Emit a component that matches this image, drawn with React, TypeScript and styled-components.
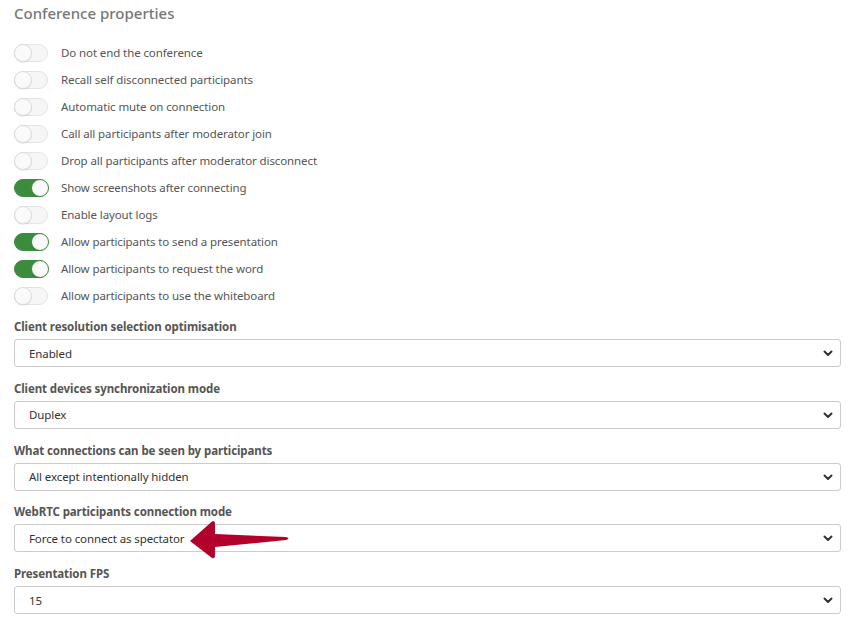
import React from 'react';
import styled, { createGlobalStyle } from 'styled-components';

const GlobalStyle = createGlobalStyle`
  html, body {
    margin: 0;
    padding: 0;
    background: #fff;
  }
  body {
    font-family: "Noto Sans", "Open Sans", Arial, sans-serif;
  }
`;

const Page = styled.div`
  padding: 3px 12px 0 14px;
  width: 827px;
`;

const Title = styled.h2`
  margin: 0 0 20.5px;
  font-size: 15px;
  font-weight: 500;
  color: #777;
  line-height: 20px;
`;

const SwitchList = styled.div`
  display: flex;
  flex-direction: column;
  gap: 9px;
  margin-bottom: 13.5px;
`;

const SwitchRow = styled.label`
  display: flex;
  align-items: center;
  gap: 13px;
  height: 18px;
  font-size: 11.5px;
  letter-spacing: -0.1px;
  color: #555;
`;

const Track = styled.span<{ $on: boolean }>`
  position: relative;
  flex: none;
  width: 34px;
  height: 18px;
  box-sizing: border-box;
  border-radius: 9px;
  background: ${(p) => (p.$on ? '#3b8c3d' : '#f6f6f6')};
  border: 1px solid ${(p) => (p.$on ? '#3b8c3d' : '#e4e4e4')};
`;

const Knob = styled.span<{ $on: boolean }>`
  position: absolute;
  top: -1px;
  left: ${(p) => (p.$on ? '16px' : '-1px')};
  width: 18px;
  height: 18px;
  box-sizing: border-box;
  border-radius: 50%;
  background: #fafafa;
  border: 1px solid ${(p) => (p.$on ? '#3b8c3d' : '#dcdcdc')};
  box-shadow: 0 1px 1px rgba(0, 0, 0, 0.08);
`;

const Field = styled.div`
  position: relative;
  display: flex;
  flex-direction: column;
  gap: 4px;
  margin-bottom: 12.75px;
`;

const FieldLabel = styled.div`
  font-size: 11.5px;
  letter-spacing: -0.1px;
  font-weight: 700;
  color: #555;
  line-height: 17px;
`;

const Select = styled.div`
  display: flex;
  align-items: center;
  justify-content: space-between;
  height: 28px;
  box-sizing: border-box;
  padding: 0 6px 0 14px;
  border: 1px solid #ccc;
  border-radius: 3px;
  font-size: 11.5px;
  letter-spacing: -0.1px;
  color: #333;
  background: #fff;
`;

const Chevron = () => (
  <svg width="12" height="12" viewBox="0 0 12 12">
    <path d="M2.5 4.5 L6 8 L9.5 4.5" fill="none" stroke="#333" strokeWidth="2" strokeLinecap="round" strokeLinejoin="round" />
  </svg>
);

// red pointer drawn on top of the select
const Pointer = styled.svg`
  position: absolute;
  left: 174px;
  top: 17px;
  pointer-events: none;
`;

const switches: [string, boolean][] = [
  ['Do not end the conference', false],
  ['Recall self disconnected participants', false],
  ['Automatic mute on connection', false],
  ['Call all participants after moderator join', false],
  ['Drop all participants after moderator disconnect', false],
  ['Show screenshots after connecting', true],
  ['Enable layout logs', false],
  ['Allow participants to send a presentation', true],
  ['Allow participants to request the word', true],
  ['Allow participants to use the whiteboard', false],
];

const fields: [string, string][] = [
  ['Client resolution selection optimisation', 'Enabled'],
  ['Client devices synchronization mode', 'Duplex'],
  ['What connections can be seen by participants', 'All except intentionally hidden'],
  ['WebRTC participants connection mode', 'Force to connect as spectator'],
  ['Presentation FPS', '15'],
];

export default function App() {
  return (
    <>
      <GlobalStyle />
      <Page>
        <Title>Conference properties</Title>
        <SwitchList>
          {switches.map(([text, on]) => (
            <SwitchRow key={text}>
              <Track $on={on}>
                <Knob $on={on} />
              </Track>
              {text}
            </SwitchRow>
          ))}
        </SwitchList>
        {fields.map(([label, value]) => (
          <Field key={label}>
            <FieldLabel>{label}</FieldLabel>
            <Select>
              {value}
              <Chevron />
            </Select>
            {label.startsWith('WebRTC') && (
              <Pointer width="110" height="42" viewBox="0 0 110 42">
                <path
                  d="M2 21 L24 1.5 Q27 0 27 4 L27 14 L98 17 Q103 18.5 98 20 L27 27 L27 35 Q27 39 24 38 Z"
                  fill="#b3002a"
                />
              </Pointer>
            )}
          </Field>
        ))}
      </Page>
    </>
  );
}
